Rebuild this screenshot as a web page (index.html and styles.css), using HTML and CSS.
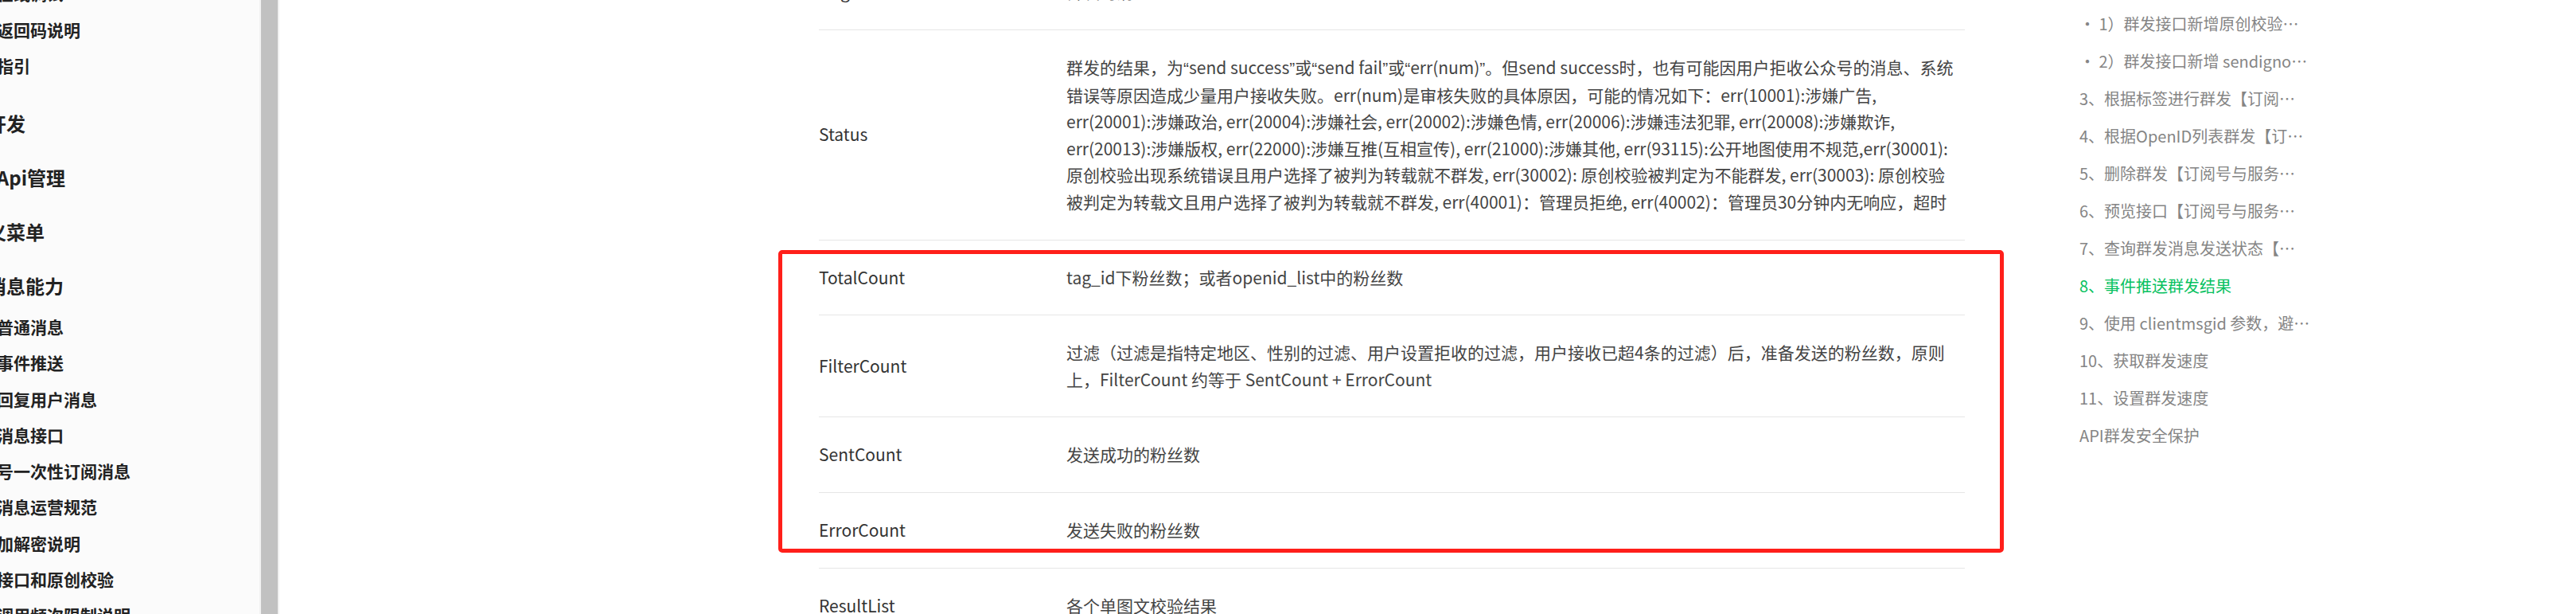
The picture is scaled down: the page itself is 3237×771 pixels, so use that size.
FILE: index.html
```html
<!DOCTYPE html>
<html lang="zh-CN">
<head>
<meta charset="utf-8">
<title>事件推送群发结果</title>
<link rel="stylesheet" href="styles.css">
</head>
<body>
<div class="page">
  <aside class="sidebar">
    <div class="nav">
      <div class="nav-item">接口在线调试</div>
      <div class="nav-item">全局返回码说明</div>
      <div class="nav-item">接入指引</div>
      <div class="nav-group">开始开发</div>
      <div class="nav-group">openApi管理</div>
      <div class="nav-group">自定义菜单</div>
      <div class="nav-group open">基础消息能力</div>
      <div class="nav-item">接收普通消息</div>
      <div class="nav-item">接收事件推送</div>
      <div class="nav-item">被动回复用户消息</div>
      <div class="nav-item">模板消息接口</div>
      <div class="nav-item">公众号一次性订阅消息</div>
      <div class="nav-item">模板消息运营规范</div>
      <div class="nav-item">消息加解密说明</div>
      <div class="nav-item">群发接口和原创校验</div>
      <div class="nav-item">接口调用频次限制说明</div>
    </div>
  </aside>
  <div class="scrollbar"><div class="thumb"></div></div>
  <main class="content">
    <div class="table-wrap">
      <table class="params">
        <colgroup><col class="col-name"><col class="col-desc"></colgroup>
        <tr><td class="name">MsgID</td><td class="desc">群发的消息ID</td></tr>
        <tr>
          <td class="name">Status</td>
          <td class="desc nowrap">群发的结果，为<span class="q">“</span>send success<span class="q">”</span>或<span class="q">“</span>send fail<span class="q">”</span>或<span class="q">“</span>err(num)<span class="q">”</span>。但send success时，也有可能因用户拒收公众号的消息、系统<br>错误等原因造成少量用户接收失败。err(num)是审核失败的具体原因，可能的情况如下：err(10001):涉嫌广告,<br>err(20001):涉嫌政治, err(20004):涉嫌社会, err(20002):涉嫌色情, err(20006):涉嫌违法犯罪, err(20008):涉嫌欺诈,<br>err(20013):涉嫌版权, err(22000):涉嫌互推(互相宣传), err(21000):涉嫌其他, err(93115):公开地图使用不规范,err(30001):<br>原创校验出现系统错误且用户选择了被判为转载就不群发, err(30002): 原创校验被判定为不能群发, err(30003): 原创校验<br>被判定为转载文且用户选择了被判为转载就不群发, err(40001)：管理员拒绝, err(40002)：管理员30分钟内无响应，超时</td>
        </tr>
        <tr><td class="name">TotalCount</td><td class="desc">tag_id下粉丝数；或者openid_list中的粉丝数</td></tr>
        <tr><td class="name">FilterCount</td><td class="desc nowrap">过滤（过滤是指特定地区、性别的过滤、用户设置拒收的过滤，用户接收已超4条的过滤）后，准备发送的粉丝数，原则<br>上，FilterCount 约等于 SentCount + ErrorCount</td></tr>
        <tr><td class="name">SentCount</td><td class="desc">发送成功的粉丝数</td></tr>
        <tr><td class="name">ErrorCount</td><td class="desc">发送失败的粉丝数</td></tr>
        <tr><td class="name">ResultList</td><td class="desc">各个单图文校验结果</td></tr>
      </table>
      <div class="highlight"></div>
    </div>
  </main>
  <nav class="toc">
    <div class="toc-item">· 1）群发接口新增原创校验流程</div>
    <div class="toc-item">· 2）群发接口新增 sendignore_reprint 参数</div>
    <div class="toc-item">3、根据标签进行群发【订阅号与服务号认证后均可用】</div>
    <div class="toc-item">4、根据OpenID列表群发【订阅号不可用，服务号认证后可用】</div>
    <div class="toc-item">5、删除群发【订阅号与服务号认证后均可用】</div>
    <div class="toc-item">6、预览接口【订阅号与服务号认证后均可用】</div>
    <div class="toc-item">7、查询群发消息发送状态【订阅号与服务号认证后均可用】</div>
    <div class="toc-item active">8、事件推送群发结果</div>
    <div class="toc-item">9、使用 clientmsgid 参数，避免重复推送</div>
    <div class="toc-item">10、获取群发速度</div>
    <div class="toc-item">11、设置群发速度</div>
    <div class="toc-item">API群发安全保护</div>
  </nav>
</div>
</body>
</html>
```
FILE: styles.css
```css
html, body {
  margin: 0;
  padding: 0;
  background: #ffffff;
  overflow: hidden;
}
body {
  font-family: "Noto Sans CJK SC", "Noto Sans", sans-serif;
}
.page {
  display: flex;
  height: 771px;
  overflow: hidden;
}

/* left navigation */
.sidebar {
  width: 326px;
  flex: none;
  background: #fbfbfb;
  overflow: hidden;
}
.nav {
  margin-top: -30.65px;
  margin-left: -46px;
  white-space: nowrap;
  color: #222222;
  font-weight: 700;
}
.nav-item {
  font-size: 21px;
  height: 45.3px;
  line-height: 45.3px;
}
.nav-group {
  font-size: 24px;
  height: 68px;
  box-sizing: border-box;
  padding-top: 30.7px;
  line-height: 37.3px;
  margin-left: -18px;
}
.nav-group.open {
  margin-bottom: 10.7px;
}

/* scrollbar */
.scrollbar {
  width: 25px;
  flex: none;
  background: #f1f1f1;
  padding: 0 2px;
  box-sizing: border-box;
}
.thumb {
  height: 100%;
  background: #c1c1c1;
}

/* main content */
.content {
  width: 2262px;
  flex: none;
  padding-left: 678px;
  box-sizing: border-box;
}
.table-wrap {
  position: relative;
  width: 1440px;
  margin-top: -56.6px;
}
.params {
  width: 100%;
  border-collapse: collapse;
  table-layout: fixed;
  font-size: 21px;
  line-height: 33.6px;
}
.col-name {
  width: 311px;
}
.params td {
  padding: 30px 0;
  border-bottom: 1px solid #e6e6e6;
  vertical-align: middle;
}
.name {
  color: #333333;
}
.desc {
  color: #444444;
}
.nowrap {
  white-space: nowrap;
}
.q {
  font-family: "Liberation Sans", sans-serif;
}
.highlight {
  position: absolute;
  left: -51px;
  top: 370.6px;
  width: 1540px;
  height: 380px;
  border: 5px solid #ff1f1a;
  border-radius: 5px;
  box-sizing: border-box;
  pointer-events: none;
}

/* right table of contents */
.toc {
  flex: 1;
  padding-top: 5.5px;
  font-size: 20px;
  color: #858585;
}
.toc-item {
  height: 47px;
  line-height: 47px;
  max-width: 291px;
  white-space: nowrap;
  overflow: hidden;
  text-overflow: ellipsis;
}
.toc-item.active {
  color: #07c160;
}
```
